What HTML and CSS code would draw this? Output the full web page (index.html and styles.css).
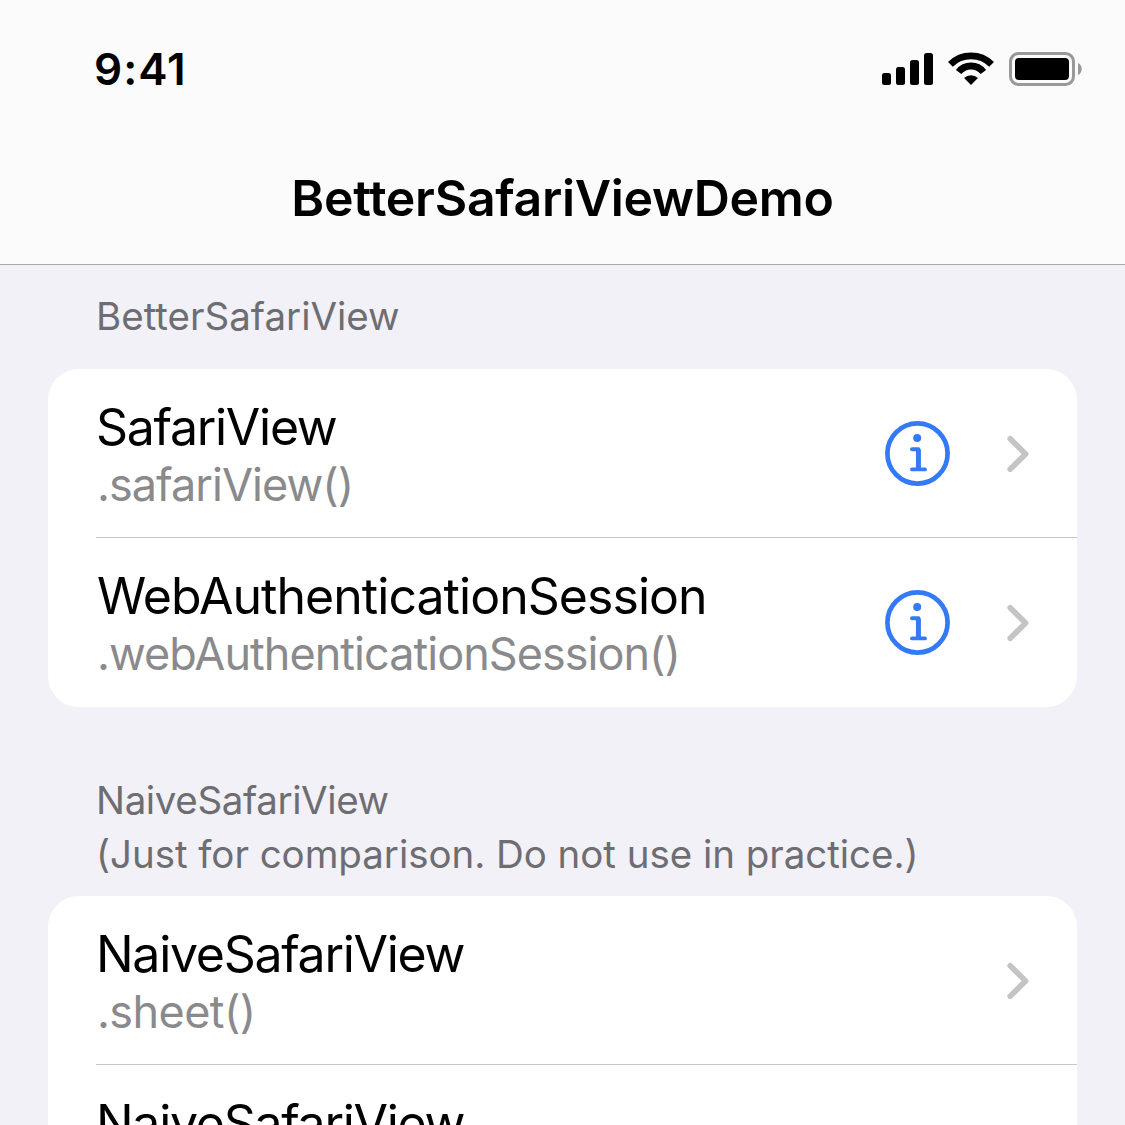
FILE: index.html
```html
<!DOCTYPE html>
<html lang="en">
<head>
<meta charset="utf-8">
<title>BetterSafariViewDemo</title>
<link rel="stylesheet" href="styles.css">
</head>
<body>
<svg class="symbols" width="0" height="0" aria-hidden="true">
  <symbol id="info" viewBox="0 0 65 65">
    <circle cx="32.5" cy="32.5" r="30.1" fill="none" stroke="currentColor" stroke-width="4.7"/>
    <circle cx="32.2" cy="17" r="4" fill="currentColor"/>
    <path d="M27 28.3h6.5v19.9M27 48.4h13" fill="none" stroke="currentColor" stroke-width="3.9" stroke-linecap="round" stroke-linejoin="round"/>
    <path d="M33.4 28.5v19" fill="none" stroke="currentColor" stroke-width="4.9"/>
  </symbol>
  <symbol id="chevron" viewBox="0 0 22 38">
    <path d="M3.2 3.8L18.6 19 3.2 34.2" fill="none" stroke="currentColor" stroke-width="5.6" stroke-linecap="round" stroke-linejoin="round"/>
  </symbol>
</svg>
<header class="navbar">
  <div class="status">
    <span class="time">9:41</span>
    <div class="indicators">
      <svg width="51" height="33" viewBox="0 0 51 33"><rect y="21" width="9" height="12" rx="2.5"/><rect x="14" y="15" width="9" height="18" rx="2.5"/><rect x="28" y="8" width="9" height="25" rx="2.5"/><rect x="42" y="1" width="9" height="32" rx="2.5"/></svg>
      <svg class="wifi" width="46" height="33" viewBox="0 0 46 33"><g fill="none" stroke="#000"><path d="M2.4 12.3A29.3 29.3 0 0 1 43.6 12.3" stroke-width="6.8"/><path d="M10.6 20A15.8 15.8 0 0 1 35.4 20" stroke-width="6.8"/></g><path d="M23 33l-6.9-6.9a9.8 9.8 0 0 1 13.8 0z"/></svg>
      <svg class="battery" width="73" height="34" viewBox="0 0 73 34"><rect x="1.5" y="1.5" width="63" height="31" rx="8" fill="none" stroke="#999" stroke-width="3"/><rect x="6" y="6" width="54" height="22" rx="4"/><path d="M69 11a6.7 6.7 0 0 1 0 12z" fill="#999"/></svg>
    </div>
  </div>
  <h1 class="title">BetterSafariViewDemo</h1>
</header>
<main class="list">
  <section>
    <h2 class="section-header first">BetterSafariView</h2>
    <div class="card">
      <div class="row">
        <div class="labels"><div class="name">SafariView</div><div class="detail">.safariView()</div></div>
        <svg class="info"><use href="#info"/></svg>
        <svg class="chevron"><use href="#chevron"/></svg>
      </div>
      <div class="row">
        <div class="labels"><div class="name long">WebAuthenticationSession</div><div class="detail">.webAuthenticationSession()</div></div>
        <svg class="info"><use href="#info"/></svg>
        <svg class="chevron"><use href="#chevron"/></svg>
      </div>
    </div>
  </section>
  <section>
    <h2 class="section-header"><span class="tight">NaiveSafariView</span><br><span class="note">(Just for comparison. Do not use in practice.)</span></h2>
    <div class="card">
      <div class="row">
        <div class="labels"><div class="name">NaiveSafariView</div><div class="detail short">.sheet()</div></div>
        <svg class="chevron"><use href="#chevron"/></svg>
      </div>
      <div class="row">
        <div class="labels"><div class="name">NaiveSafariView</div></div>
      </div>
    </div>
  </section>
</main>
</body>
</html>
```
FILE: styles.css
```css
* { box-sizing: border-box; }
body {
  margin: 0;
  width: 1125px;
  height: 1125px;
  overflow: hidden;
  background: #f2f1f7;
  color: #000;
  font-family: Inter, "Liberation Sans", sans-serif;
}
svg { display: block; flex: none; }
.symbols { position: absolute; }
h1, h2 { margin: 0; font-weight: 400; }
.navbar {
  height: 265px;
  padding-top: 42px;
  background: #fbfbfc;
  border-bottom: 1px solid #a9a9ac;
}
.status {
  display: flex;
  justify-content: space-between;
  height: 126px;
  padding: 0 43px 0 94px;
}
.time { font-size: 44px; line-height: 54px; font-weight: 600; letter-spacing: 1px; }
.indicators { display: flex; align-items: flex-start; padding-top: 10px; }
.wifi { margin-left: 15px; }
.battery { margin-left: 15px; }
.title {
  font-size: 50px;
  line-height: 60px;
  font-weight: 600;
  text-align: center;
  letter-spacing: -0.3px;
}
.list { padding: 0 48px; }
.section-header {
  padding: 66px 48px 15px;
  font-size: 38.5px;
  line-height: 54px;
  color: #6d6d72;
}
.section-header.first { padding: 24px 48px 26px; }
.tight { letter-spacing: -0.38px; }
.note { letter-spacing: -0.04px; }
.card { background: #fff; border-radius: 31px; overflow: hidden; }
.row {
  display: flex;
  height: 169px;
  margin-left: 48px;
  padding-right: 48px;
  border-bottom: 1px solid #c6c6c8;
}
.row:last-child { border-bottom: 0; }
.labels { flex: 1; padding-top: 28px; white-space: nowrap; }
.name { font-size: 50px; line-height: 60px; letter-spacing: -1.3px; }
.name.long { padding-left: 1px; letter-spacing: -0.96px; }
.detail { padding-left: 1px; font-size: 45px; line-height: 56px; letter-spacing: -0.97px; color: #8a8a8c; }
.detail.short { letter-spacing: -0.6px; }
.info { width: 65px; height: 65px; margin-top: 52px; color: #347af6; }
.chevron { width: 22px; height: 38px; margin: 66px 0 0 57px; color: #c4c4c6; }
```
